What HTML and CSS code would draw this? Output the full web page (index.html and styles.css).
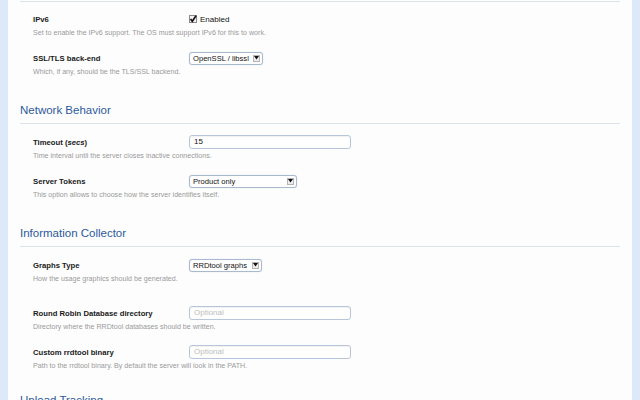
FILE: index.html
```html
<!DOCTYPE html>
<html>
<head>
<meta charset="utf-8">
<link rel="stylesheet" href="styles.css">
</head>
<body>
<main class="panel">
  <section class="section">
    <div class="rule"></div>
    <div class="field first">
      <div class="row">
        <div class="label">IPv6</div>
        <label class="check"><span class="box"><svg width="8" height="8" viewBox="0 0 8 8"><path d="M1.5 4 L3.3 6.3 L7 0.8" fill="none" stroke="#111" stroke-width="1.6"/></svg></span>Enabled</label>
      </div>
      <div class="desc">Set to enable the IPv6 support. The OS must support IPv6 for this to work.</div>
    </div>
    <div class="field">
      <div class="row">
        <div class="label">SSL/TLS back-end</div>
        <div class="select w74"><span class="val">OpenSSL / libssl</span><span class="arrow"><svg width="5" height="4" viewBox="0 0 5 4"><path d="M0 0 H5 L2.5 3.5 Z" fill="#111"/></svg></span></div>
      </div>
      <div class="desc">Which, if any, should be the TLS/SSL backend.</div>
    </div>
  </section>

  <section class="section">
    <h2 class="heading">Network Behavior</h2>
    <div class="field">
      <div class="row">
        <div class="label">Timeout (<em>secs</em>)</div>
        <div class="input">15</div>
      </div>
      <div class="desc">Time interval until the server closes inactive connections.</div>
    </div>
    <div class="field">
      <div class="row">
        <div class="label">Server Tokens</div>
        <div class="select w108"><span class="val">Product only</span><span class="arrow"><svg width="5" height="4" viewBox="0 0 5 4"><path d="M0 0 H5 L2.5 3.5 Z" fill="#111"/></svg></span></div>
      </div>
      <div class="desc">This option allows to choose how the server identifies itself.</div>
    </div>
  </section>

  <section class="section compact">
    <h2 class="heading">Information Collector</h2>
    <div class="field spaced">
      <div class="row">
        <div class="label">Graphs Type</div>
        <div class="select w73"><span class="val">RRDtool graphs</span><span class="arrow"><svg width="5" height="4" viewBox="0 0 5 4"><path d="M0 0 H5 L2.5 3.5 Z" fill="#111"/></svg></span></div>
      </div>
      <div class="desc">How the usage graphics should be generated.</div>
    </div>
    <div class="field">
      <div class="row">
        <div class="label">Round Robin Database directory</div>
        <div class="input placeholder">Optional</div>
      </div>
      <div class="desc">Directory where the RRDtool databases should be written.</div>
    </div>
    <div class="field">
      <div class="row">
        <div class="label">Custom rrdtool binary</div>
        <div class="input placeholder">Optional</div>
      </div>
      <div class="desc">Path to the rrdtool binary. By default the server will look in the PATH.</div>
    </div>
  </section>

  <section class="section">
    <h2 class="heading">Upload Tracking</h2>
  </section>
</main>
</body>
</html>
```
FILE: styles.css
```css
html, body {
  margin: 0;
  padding: 0;
  height: 100%;
  overflow: hidden;
}
body {
  background: #dde9f9;
  font-family: "Liberation Sans", Arial, sans-serif;
  color: #222;
}
.panel {
  margin: 0 8px;
  height: 100%;
  background: #fdfdfd;
  padding: 1px 12px 0;
  box-sizing: border-box;
}
.rule {
  border-top: 1px solid #dce3ee;
}
.section {
  padding-bottom: 25px;
}
.section.compact {
  padding-bottom: 21px;
}
.heading {
  margin: 0;
  font-size: 11.5px;
  line-height: 16px;
  font-weight: normal;
  color: #2c5a9c;
  padding-bottom: 5px;
  border-bottom: 1px solid #dce3ee;
}
.field {
  padding-left: 13px;
  margin-top: 13px;
}
.heading + .field {
  margin-top: 11px;
}
.field.first {
  margin-top: 10px;
}
.field.spaced {
  margin-bottom: 22px;
}
.row {
  display: flex;
  align-items: center;
  height: 14px;
}
.label {
  width: 156px;
  flex: none;
  font-size: 7.7px;
  font-weight: bold;
  color: #1a1a1a;
}
.label em {
  font-style: italic;
}
.desc {
  margin-top: 2px;
  font-size: 7.1px;
  line-height: 10px;
  color: #9a9a9a;
}
.check {
  display: flex;
  align-items: center;
  font-size: 8px;
  color: #111;
}
.box {
  width: 8px;
  height: 8px;
  border: 1px solid #8a8a8a;
  background: #f2f2f2;
  box-sizing: border-box;
  margin-right: 3px;
  display: flex;
  align-items: center;
  justify-content: center;
}
.box svg {
  overflow: visible;
  margin-top: -1px;
}
.select {
  height: 13px;
  box-sizing: border-box;
  border: 1px solid #a9bad0;
  border-radius: 3px;
  background: #fff;
  display: flex;
  align-items: center;
  padding: 0 2px 0 3px;
  font-size: 7.6px;
  color: #111;
  box-shadow: 0 0 1px rgba(100, 140, 190, 0.4);
}
.val {
  flex: 1;
  min-width: 0;
  overflow: hidden;
  white-space: nowrap;
}
.w74 { width: 74px; }
.w108 { width: 108px; }
.w73 { width: 73px; }
.arrow {
  flex: none;
  width: 7px;
  height: 7px;
  margin-left: 2px;
  box-sizing: border-box;
  border: 1px solid #b4b4b4;
  background: #ececec;
  display: flex;
  align-items: center;
  justify-content: center;
}
.arrow svg {
  display: block;
}
.input {
  width: 162px;
  height: 14px;
  box-sizing: border-box;
  border: 1px solid #b7c6da;
  border-radius: 3px;
  background: #fff;
  box-shadow: inset 0 1px 1px rgba(0, 0, 0, 0.06);
  padding: 0 4px;
  font-size: 8px;
  line-height: 12px;
  color: #111;
}
.input.placeholder {
  color: #bdbdbd;
}
```
